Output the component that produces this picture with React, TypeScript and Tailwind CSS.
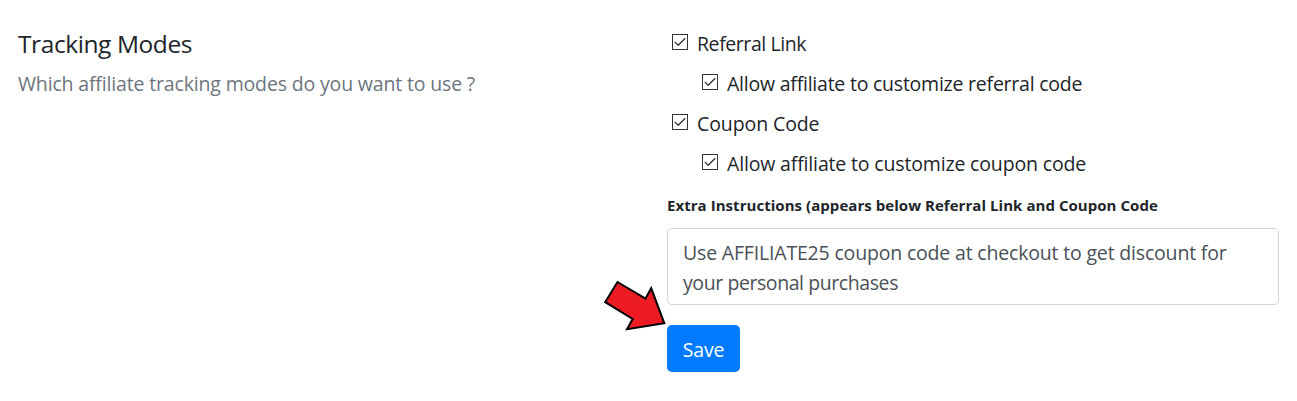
import React from "react";

function Check() {
  return (
    <svg width="16" height="16" viewBox="0 0 16 16" className="mb-1 shrink-0" aria-hidden="true">
      <rect x="0.5" y="0.5" width="15" height="15" fill="#fff" stroke="#333" />
      <path d="M2.8 7.9 L6.2 11.3 L13.2 4.3" fill="none" stroke="#333" strokeWidth="1.3" />
    </svg>
  );
}

type OptionProps = { label: string; nested?: boolean; text: string };

function Option({ label, nested, text }: OptionProps) {
  return (
    <label className={`flex h-[30px] items-center gap-[9px] ${nested ? "pl-[35px]" : "pl-[5px]"}`}>
      <Check />
      <span className={`whitespace-nowrap ${text}`}>{label}</span>
    </label>
  );
}

function Arrow() {
  return (
    <svg
      width="66"
      height="54"
      viewBox="602 278 66 54"
      className="absolute -left-[65px] -top-[47px]"
      aria-hidden="true"
    >
      <path
        d="M617.5 282 L645.5 298.5 L651.2 288.2 L664.3 323.3 L627 329.3 L632.7 319 L605.2 302.2 Z"
        fill="#ed1c24"
        stroke="#000"
        strokeWidth="2"
      />
    </svg>
  );
}

export default function App() {
  return (
    <main className="flex h-[401px] w-[1297px] bg-white pl-[18px] pt-[29px] font-['Open_Sans','Noto_Sans',sans-serif] text-[19.5px] leading-[30px] text-[#212529]">
      <section className="w-[649px] shrink-0">
        <h1 className="text-[24.5px] leading-[30px] tracking-[-0.41px]">Tracking Modes</h1>
        <p className="mt-[10px] tracking-[-0.16px] text-[#6c757d]">Which affiliate tracking modes do you want to use ?</p>
      </section>
      <section className="w-[612px] shrink-0">
        <div className="flex flex-col gap-[10px]">
          <Option label="Referral Link" text="tracking-[-0.42px]" />
          <Option label="Allow affiliate to customize referral code" nested text="tracking-[-0.23px]" />
          <Option label="Coupon Code" text="tracking-[-0.1px]" />
          <Option label="Allow affiliate to customize coupon code" nested text="tracking-[-0.16px]" />
        </div>
        <div className="mt-[14px] text-[15px] font-bold leading-[24px] tracking-[0.05px]">
          Extra Instructions (appears below Referral Link and Coupon Code
        </div>
        <div className="mt-[11px] h-[77px] rounded-[5px] border border-[#ced4da] px-[15px] pt-[9px] text-[#495057]">
          <p className="whitespace-nowrap tracking-[-0.18px]">Use AFFILIATE25 coupon code at checkout to get discount for</p>
          <p className="tracking-[-0.42px]">your personal purchases</p>
        </div>
        <div className="relative mt-5 w-[73px]">
          <button className="h-[47px] w-[73px] rounded-[5px] bg-[#007bff] pt-[3px] tracking-[-0.2px] text-white">Save</button>
          <Arrow />
        </div>
      </section>
    </main>
  );
}
